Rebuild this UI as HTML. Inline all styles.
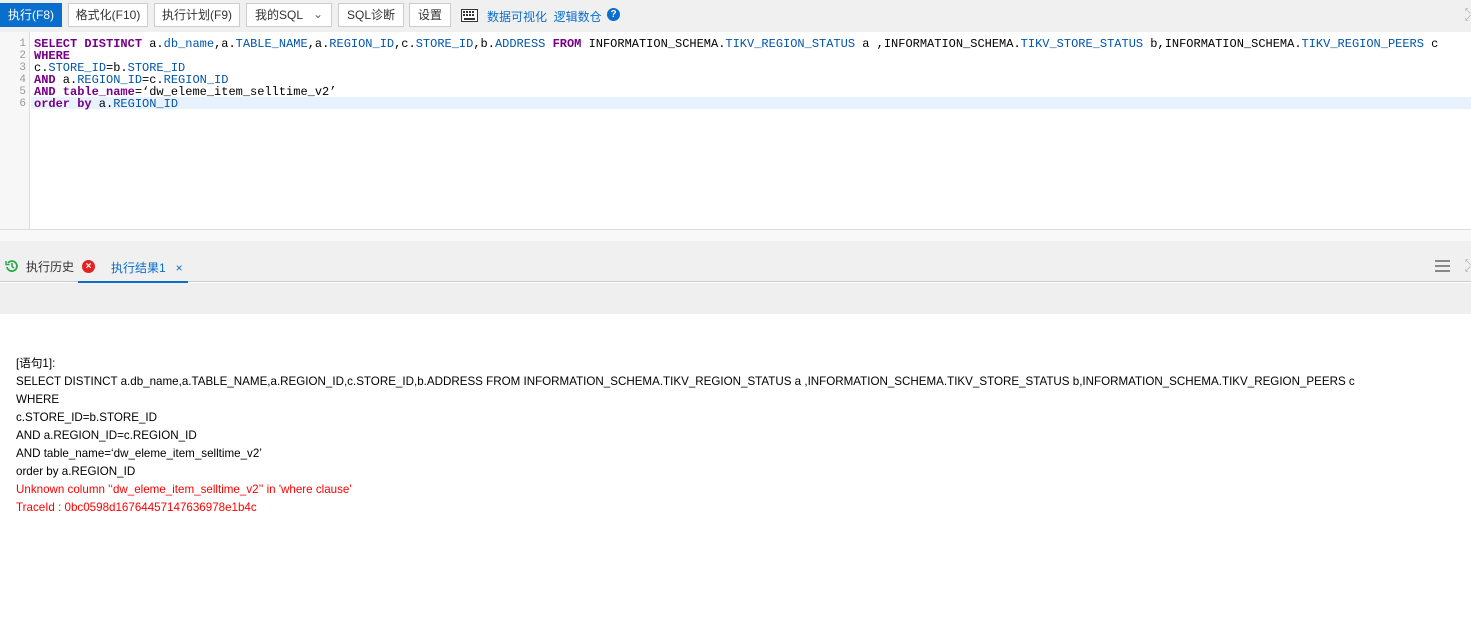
<!DOCTYPE html>
<html><head><meta charset="utf-8"><style>
*{margin:0;padding:0;box-sizing:border-box}
body{width:1471px;height:633px;overflow:hidden;background:#fff;font-family:"Liberation Sans","Noto Sans CJK SC",sans-serif;position:relative}
.tb{position:absolute;left:0;top:0;width:1471px;height:32px;background:#f0f0f0}
.btn{position:absolute;top:3px;height:24px;border:1px solid #ccc;background:#fff;font-size:12px;color:#333;line-height:22px;text-align:center}
.ed{position:absolute;left:0;top:32px;width:1471px;height:197px;background:#fff}
.gut{position:absolute;left:0;top:0;width:30px;height:197px;background:#f7f7f7;border-right:1px solid #ddd}
.ln{position:absolute;left:0;width:26px;text-align:right;font:11px/12px "Liberation Mono",monospace;color:#999}
.code{position:absolute;left:34px;font:12px/12px "Liberation Mono",monospace;color:#000;white-space:pre}
.k{color:#708;font-weight:bold}.p{color:#05a}
.res{position:absolute;left:16px;top:355px;font-size:11.6px;line-height:18px;color:#000}
</style></head><body>
<div class="tb">
<div class="btn" style="left:0;top:3px;width:62px;background:#0a6ecd;border-color:#0a6ecd;color:#fff">执行(F8)</div>
<div class="btn" style="left:68px;width:80px">格式化(F10)</div>
<div class="btn" style="left:154px;width:86px">执行计划(F9)</div>
<div class="btn" style="left:246px;width:86px;text-align:left;padding-left:8px">我的SQL <span style="position:absolute;right:8px;top:-1px;color:#666">&#8964;</span></div>
<div class="btn" style="left:338px;width:66px">SQL诊断</div>
<div class="btn" style="left:409px;width:42px">设置</div>
<svg style="position:absolute;left:461px;top:9px" width="17" height="13" viewBox="0 0 17 13"><rect x="0.5" y="0.5" width="16" height="12" fill="#fff" stroke="#333"/><g fill="#333"><rect x="2" y="2" width="2" height="2"/><rect x="5" y="2" width="2" height="2"/><rect x="8" y="2" width="2" height="2"/><rect x="11" y="2" width="2" height="2"/><rect x="2" y="5" width="2" height="2"/><rect x="5" y="5" width="2" height="2"/><rect x="8" y="5" width="2" height="2"/><rect x="11" y="5" width="2" height="2"/><rect x="3" y="9" width="11" height="2"/></g></svg>
<div style="position:absolute;left:487px;top:8px;font-size:12px;color:#0a6ecd">数据可视化 &nbsp;逻辑数仓</div>
<div style="position:absolute;left:607px;top:8px;width:13px;height:13px;border-radius:50%;background:#0a6ecd;color:#fff;font-size:10px;font-weight:bold;text-align:center;line-height:13px">?</div>
<div style="position:absolute;left:1464px;top:8px;font-size:8px;color:#aaa;line-height:7px">↖<br>↙</div>
</div>
<div class="ed">
<div class="gut"></div>
<div style="position:absolute;left:31px;top:65px;width:1440px;height:12px;background:#e8f2fe"></div>
<div class="ln" style="top:6px">1<br>2<br>3<br>4<br>5<br>6</div>
<div class="code" style="top:6px"><span class="k">SELECT DISTINCT</span> a.<span class="p">db_name</span>,a.<span class="p">TABLE_NAME</span>,a.<span class="p">REGION_ID</span>,c.<span class="p">STORE_ID</span>,b.<span class="p">ADDRESS</span> <span class="k">FROM</span> INFORMATION_SCHEMA.<span class="p">TIKV_REGION_STATUS</span> a ,INFORMATION_SCHEMA.<span class="p">TIKV_STORE_STATUS</span> b,INFORMATION_SCHEMA.<span class="p">TIKV_REGION_PEERS</span> c
<span class="k">WHERE</span>
c.<span class="p">STORE_ID</span>=b.<span class="p">STORE_ID</span>
<span class="k">AND</span> a.<span class="p">REGION_ID</span>=c.<span class="p">REGION_ID</span>
<span class="k">AND table_name</span>=‘dw_eleme_item_selltime_v2’
<span class="k">order by</span> a.<span class="p">REGION_ID</span></div>
</div>
<div style="position:absolute;left:0;top:229px;width:1471px;height:12px;background:#f8f8f8;border-top:1px solid #ddd"></div>
<div style="position:absolute;left:0;top:241px;width:1471px;height:41px;background:#f0f0f0;border-bottom:1px solid #ccc"></div>
<svg style="position:absolute;left:5px;top:259px" width="14" height="14" viewBox="0 0 14 14"><path d="M3 4A5 5 0 1 1 2 8" fill="none" stroke="#2ba84a" stroke-width="1.8"/><path d="M1 2v3.5h3.5" fill="none" stroke="#2ba84a" stroke-width="1.5"/><path d="M7 4v3.5l2 1.5" fill="none" stroke="#2ba84a" stroke-width="1.5"/></svg>
<div style="position:absolute;left:26px;top:258px;font-size:12px;color:#333">执行历史</div>
<div style="position:absolute;left:82px;top:260px;width:13px;height:13px;border-radius:50%;background:#e32222;color:#fff;font-size:10px;font-weight:bold;text-align:center;line-height:13px">×</div>
<div style="position:absolute;left:78px;top:281px;width:110px;height:2px;background:#0a6ecd"></div>
<div style="position:absolute;left:111px;top:259px;font-size:12px;color:#0a6ecd">执行结果1 &nbsp;&nbsp;×</div>
<div style="position:absolute;left:1435px;top:260px;width:15px;height:2px;background:#888;box-shadow:0 5px 0 #888,0 10px 0 #888"></div>
<div style="position:absolute;left:1464px;top:259px;font-size:8px;color:#aaa;line-height:7px">↖<br>↙</div>
<div style="position:absolute;left:0;top:283px;width:1471px;height:31px;background:#efefef"></div>
<div class="res">[语句1]:<br>SELECT DISTINCT a.db_name,a.TABLE_NAME,a.REGION_ID,c.STORE_ID,b.ADDRESS FROM INFORMATION_SCHEMA.TIKV_REGION_STATUS a ,INFORMATION_SCHEMA.TIKV_STORE_STATUS b,INFORMATION_SCHEMA.TIKV_REGION_PEERS c<br>WHERE<br>c.STORE_ID=b.STORE_ID<br>AND a.REGION_ID=c.REGION_ID<br>AND table_name=‘dw_eleme_item_selltime_v2’<br>order by a.REGION_ID<br><span style="color:#f00">Unknown column '‘dw_eleme_item_selltime_v2’' in 'where clause'</span><br><span style="color:#f00">TraceId : 0bc0598d16764457147636978e1b4c</span></div>
</body></html>
